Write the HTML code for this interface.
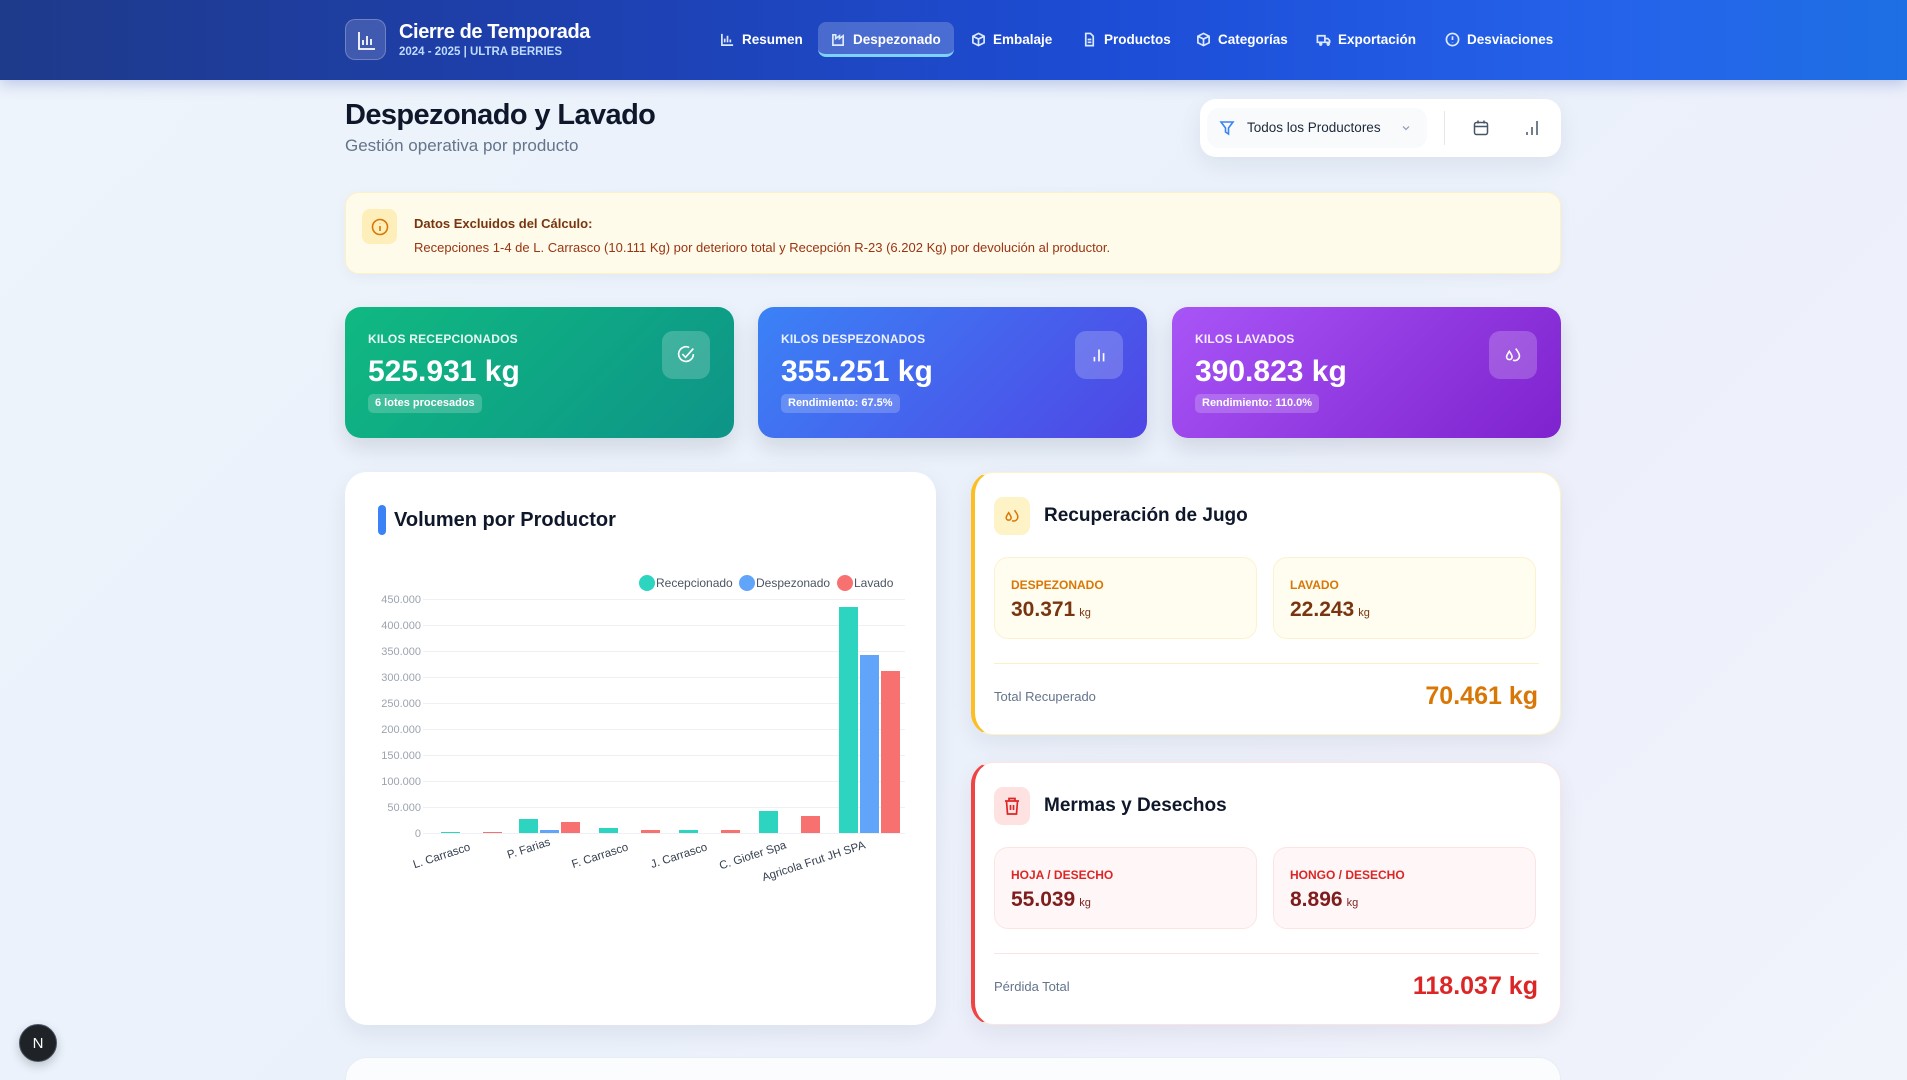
<!DOCTYPE html>
<html style="width:1907px;height:1080px;overflow:hidden"><head><meta charset="utf-8"><style>
*{box-sizing:border-box;margin:0;padding:0}
body{width:1907px;height:1080px;overflow:hidden;font-family:"Liberation Sans",sans-serif;background:linear-gradient(135deg,#eef4fb 0%,#eaf1fb 50%,#eef0fb 75%,#f1f4fb 100%);position:relative;color:#0f172a}
.abs{position:absolute}
.hdr{left:0;top:0;width:1907px;height:80px;background:linear-gradient(90deg,#1e3a8a 0%,#1e40af 30%,#1d4ed8 60%,#2563eb 85%,#1e6fe3 100%);box-shadow:0 4px 14px rgba(30,64,175,.25)}
.logo{left:345px;top:19px;width:41px;height:41px;border-radius:10px;background:rgba(255,255,255,.15);border:1px solid rgba(255,255,255,.25)}
.nav{top:22px;height:35px;display:flex;align-items:center;gap:7px;color:#fff;font-size:13.5px;font-weight:bold}
.nav svg{width:15px;height:15px;stroke:#dbeafe;fill:none;stroke-width:1.8}
.card{background:#fff;border-radius:22px;box-shadow:0 8px 24px rgba(15,23,42,.07)}
.stat{top:307px;width:389px;height:131px;border-radius:16px;color:#fff;box-shadow:0 10px 22px rgba(15,23,42,.12)}
.stat .l{position:absolute;left:23px;top:25px;font-size:12px;font-weight:bold;opacity:.9;letter-spacing:.2px}
.stat .v{position:absolute;left:23px;top:48px;font-size:30px;font-weight:bold}
.stat .b{position:absolute;left:23px;top:87px;height:19px;line-height:19px;padding:0 7px;border-radius:5px;background:rgba(255,255,255,.2);font-size:11px;font-weight:bold}
.stat .ic{position:absolute;left:317px;top:24px;width:48px;height:48px;border-radius:11px;background:rgba(255,255,255,.2);display:flex;align-items:center;justify-content:center}
.stat .ic svg{width:22px;height:22px;stroke:#fff;fill:none;stroke-width:1.8}
.sub{position:absolute;top:84px;width:263px;height:82px;border-radius:14px}
.sub .l{position:absolute;left:16px;top:20px;font-size:12px;font-weight:bold}
.sub .v{position:absolute;left:16px;top:40px;font-size:21px;font-weight:bold}
.sub .v small{font-size:11px;font-weight:normal;margin-left:4px}
</style></head><body>
<div class="abs hdr"></div>
<div class="abs logo"><svg width="41" height="41" viewBox="0 0 41 41" fill="none" stroke="#fff" stroke-width="1.8"><path d="M13 12v17h16M17 25v-5M21 25v-9M25 25v-6"/></svg></div>
<div class="abs" style="left:399px;top:21px;color:#fff;font-size:20px;font-weight:bold;letter-spacing:-.4px">Cierre de Temporada</div>
<div class="abs" style="left:399px;top:46px;color:#bfdbfe;font-size:11.5px;font-weight:bold">2024 - 2025 | ULTRA BERRIES</div>

<div class="abs nav" style="left:720px"><svg viewBox="0 0 16 16"><path d="M2 2v12h12M5 11V7M8 11V4M11 11V8"/></svg>Resumen</div>
<div class="abs" style="left:818px;top:22px;width:136px;height:35px;border-radius:8px;background:rgba(255,255,255,.2);border-bottom:3px solid #7dd3fc"></div>
<div class="abs nav" style="left:831px"><svg viewBox="0 0 16 16"><path d="M2 14V3h3v4l4-3v3l4-3v10z"/></svg>Despezonado</div>
<div class="abs nav" style="left:971px"><svg viewBox="0 0 16 16"><path d="M8 1.5l6 3v7l-6 3-6-3v-7zM2 4.5l6 3 6-3M8 7.5v7"/></svg>Embalaje</div>
<div class="abs nav" style="left:1082px"><svg viewBox="0 0 16 16"><path d="M4 1.5h5l3 3v10H4zM6 8h4M6 11h4"/></svg>Productos</div>
<div class="abs nav" style="left:1196px"><svg viewBox="0 0 16 16"><path d="M8 1.5l6 3v7l-6 3-6-3v-7zM2 4.5l6 3 6-3M8 7.5v7"/></svg>Categorías</div>
<div class="abs nav" style="left:1316px"><svg viewBox="0 0 16 16"><path d="M1.5 4h8v7h-8zM9.5 7h3l2 2v2h-5M4 13a1 1 0 1 0 0-.1M12 13a1 1 0 1 0 0-.1"/></svg>Exportación</div>
<div class="abs nav" style="left:1445px"><svg viewBox="0 0 16 16"><circle cx="8" cy="8" r="6.5"/><path d="M8 4.5v4M8 11v.5"/></svg>Desviaciones</div>

<div class="abs" style="left:345px;top:99px;font-size:29px;font-weight:bold;letter-spacing:-.6px;color:#0f172a">Despezonado y Lavado</div>
<div class="abs" style="left:345px;top:136px;font-size:17px;color:#64748b">Gestión operativa por producto</div>

<div class="abs card" style="left:1200px;top:99px;width:361px;height:58px;border-radius:16px"></div>
<div class="abs" style="left:1207px;top:108px;width:220px;height:40px;border-radius:12px;background:#f8fafc"></div>
<svg class="abs" style="left:1219px;top:120px" width="16" height="16" viewBox="0 0 16 16" fill="none" stroke="#3b82f6" stroke-width="1.6"><path d="M2 2h12l-4.5 6v6l-3-2V8z"/></svg>
<div class="abs" style="left:1247px;top:120px;font-size:13.5px;color:#1e293b">Todos los Productores</div>
<svg class="abs" style="left:1401px;top:123px" width="10" height="10" viewBox="0 0 10 10" fill="none" stroke="#94a3b8" stroke-width="1.3"><path d="M2 3.5l3 3 3-3"/></svg>
<div class="abs" style="left:1444px;top:111px;width:1px;height:34px;background:#e2e8f0"></div>
<svg class="abs" style="left:1472px;top:119px" width="18" height="18" viewBox="0 0 18 18" fill="none" stroke="#475569" stroke-width="1.5"><rect x="2.5" y="3.5" width="13" height="12" rx="2"/><path d="M2.5 7.5h13M6 1.5v3M12 1.5v3"/></svg>
<svg class="abs" style="left:1524px;top:119px" width="16" height="18" viewBox="0 0 16 18" fill="none" stroke="#475569" stroke-width="1.5"><path d="M3 16v-3M8 16V8M13 16V2"/></svg>

<div class="abs" style="left:345px;top:192px;width:1216px;height:82px;border-radius:14px;background:#fefbea;border:1px solid #fdf1c7;box-shadow:0 4px 14px rgba(15,23,42,.04)"></div>
<div class="abs" style="left:362px;top:209px;width:35px;height:35px;border-radius:8px;background:#fdeeba;display:flex;align-items:center;justify-content:center"><svg width="20" height="20" viewBox="0 0 20 20" fill="none" stroke="#d97706" stroke-width="1.6"><circle cx="10" cy="10" r="7.5"/><path d="M10 9v5M10 6.2v.3"/></svg></div>
<div class="abs" style="left:414px;top:216px;font-size:13px;font-weight:bold;color:#78350f">Datos Excluidos del Cálculo:</div>
<div class="abs" style="left:414px;top:240px;font-size:13px;color:#9a3412">Recepciones 1-4 de L. Carrasco (10.111 Kg) por deterioro total y Recepción R-23 (6.202 Kg) por devolución al productor.</div>

<div class="abs stat" style="left:345px;background:linear-gradient(135deg,#10b981,#0d9488)">
<div class="l">KILOS RECEPCIONADOS</div><div class="v">525.931 kg</div><div class="b">6 lotes procesados</div>
<div class="ic"><svg viewBox="0 0 24 24"><path d="M20 11a8 8 0 1 1-4.5-7.2"/><path d="M8 11l3.5 3.5L20 5"/></svg></div></div>
<div class="abs stat" style="left:758px;background:linear-gradient(135deg,#3b82f6,#4f46e5)">
<div class="l">KILOS DESPEZONADOS</div><div class="v">355.251 kg</div><div class="b">Rendimiento: 67.5%</div>
<div class="ic"><svg viewBox="0 0 24 24"><path d="M7 19v-5M12 19V6M17 19v-9"/></svg></div></div>
<div class="abs stat" style="left:1172px;background:linear-gradient(135deg,#a855f7,#7e22ce)">
<div class="l">KILOS LAVADOS</div><div class="v">390.823 kg</div><div class="b">Rendimiento: 110.0%</div>
<div class="ic"><svg viewBox="0 0 24 24"><path d="M8 8c-2 3-3 4.5-3 6a3 3 0 0 0 6 0c0-1.5-1-3-3-6zM15 5c2 3 4 5 4 8a5 5 0 0 1-7 4.6"/></svg></div></div>

<div class="abs card" style="left:345px;top:472px;width:591px;height:553px"></div>
<div class="abs" style="left:378px;top:505px;width:8px;height:30px;border-radius:4px;background:#3b82f6"></div>
<div class="abs" style="left:394px;top:509px;font-size:20px;font-weight:bold;color:#0f172a">Volumen por Productor</div>
<svg class="abs" style="left:345px;top:560px" width="591" height="330" font-family="Liberation Sans, sans-serif">
<g font-size="12">
<circle cx="302" cy="23" r="8" fill="#2dd4bf"/><text x="311" y="27" fill="#4b5563">Recepcionado</text>
<circle cx="402" cy="23" r="8" fill="#60a5fa"/><text x="411" y="27" fill="#4b5563">Despezonado</text>
<circle cx="500" cy="23" r="8" fill="#f87171"/><text x="509" y="27" fill="#4b5563">Lavado</text>
</g>
<g stroke="#eef0f3" stroke-width="1">
<line x1="78" x2="560" y1="39.5" y2="39.5"/><line x1="78" x2="560" y1="65.5" y2="65.5"/><line x1="78" x2="560" y1="91.5" y2="91.5"/><line x1="78" x2="560" y1="117.5" y2="117.5"/><line x1="78" x2="560" y1="143.5" y2="143.5"/><line x1="78" x2="560" y1="169.5" y2="169.5"/><line x1="78" x2="560" y1="195.5" y2="195.5"/><line x1="78" x2="560" y1="221.5" y2="221.5"/><line x1="78" x2="560" y1="247.5" y2="247.5"/><line x1="78" x2="560" y1="273.5" y2="273.5"/>
</g>
<g font-size="11" fill="#9ca3af" text-anchor="end">
<text x="76" y="43">450.000</text><text x="76" y="69">400.000</text><text x="76" y="95">350.000</text><text x="76" y="121">300.000</text><text x="76" y="147">250.000</text><text x="76" y="173">200.000</text><text x="76" y="199">150.000</text><text x="76" y="225">100.000</text><text x="76" y="251">50.000</text><text x="76" y="277">0</text>
</g>
<g>
<rect x="96" y="272" width="19" height="1" fill="#2dd4bf"/><rect x="138" y="272" width="19" height="1" fill="#f87171"/>
<rect x="174" y="259" width="19" height="14" fill="#2dd4bf"/><rect x="195" y="270" width="19" height="3" fill="#60a5fa"/><rect x="216" y="262" width="19" height="11" fill="#f87171"/>
<rect x="254" y="268" width="19" height="5" fill="#2dd4bf"/><rect x="296" y="270" width="19" height="3" fill="#f87171"/>
<rect x="334" y="270" width="19" height="3" fill="#2dd4bf"/><rect x="376" y="270" width="19" height="3" fill="#f87171"/>
<rect x="414" y="251" width="19" height="22" fill="#2dd4bf"/><rect x="456" y="256" width="19" height="17" fill="#f87171"/>
<rect x="494" y="47" width="19" height="226" fill="#2dd4bf"/><rect x="515" y="95" width="19" height="178" fill="#60a5fa"/><rect x="536" y="111" width="19" height="162" fill="#f87171"/>
</g>
<g font-size="11.5" fill="#374151" text-anchor="end">
<text transform="translate(126,290) rotate(-18)">L. Carrasco</text>
<text transform="translate(206,285) rotate(-18)">P. Farias</text>
<text transform="translate(284,290) rotate(-18)">F. Carrasco</text>
<text transform="translate(363,290) rotate(-18)">J. Carrasco</text>
<text transform="translate(442,288) rotate(-18)">C. Giofer Spa</text>
<text transform="translate(521,288) rotate(-18)">Agricola Frut JH SPA</text>
</g>
</svg>

<div class="abs card" style="left:971px;top:472px;width:590px;height:263px;border:1px solid #fdf3c9;border-left:4px solid #fbbf24">
<div class="abs" style="left:19px;top:24px;width:36px;height:38px;border-radius:9px;background:#fef3c7;display:flex;align-items:center;justify-content:center"><svg width="20" height="20" viewBox="0 0 24 24" fill="none" stroke="#d97706" stroke-width="1.8"><path d="M8 8c-2 3-3 4.5-3 6a3 3 0 0 0 6 0c0-1.5-1-3-3-6zM15 5c2 3 4 5 4 8a5 5 0 0 1-7 4.6"/></svg></div>
<div class="abs" style="left:69px;top:32px;font-size:19px;font-weight:bold;color:#0f172a">Recuperación de Jugo</div>
<div class="sub" style="left:19px;background:#fffcf0;border:1px solid #fdf2cf"><div class="l" style="color:#d97706">DESPEZONADO</div><div class="v" style="color:#78350f">30.371<small>kg</small></div></div>
<div class="sub" style="left:298px;background:#fffcf0;border:1px solid #fdf2cf"><div class="l" style="color:#d97706">LAVADO</div><div class="v" style="color:#78350f">22.243<small>kg</small></div></div>
<div class="abs" style="left:19px;top:190px;width:545px;height:1px;background:#fdf0c6"></div>
<div class="abs" style="left:19px;top:216px;font-size:13px;color:#64748b">Total Recuperado</div>
<div class="abs" style="right:22px;top:209px;font-size:25px;font-weight:bold;color:#d97706">70.461 kg</div>
</div>

<div class="abs card" style="left:971px;top:762px;width:590px;height:263px;border:1px solid #fde3e3;border-left:4px solid #ef4444">
<div class="abs" style="left:19px;top:24px;width:36px;height:38px;border-radius:9px;background:#fee2e2;display:flex;align-items:center;justify-content:center"><svg width="18" height="20" viewBox="0 0 18 20" fill="none" stroke="#dc2626" stroke-width="1.7"><path d="M2 5h14M6 5V2.5h6V5M3.5 5l1 13h9l1-13M7.5 9v5M10.5 9v5"/></svg></div>
<div class="abs" style="left:69px;top:32px;font-size:19px;font-weight:bold;color:#0f172a">Mermas y Desechos</div>
<div class="sub" style="left:19px;background:#fff7f7;border:1px solid #fde4e4"><div class="l" style="color:#dc2626">HOJA / DESECHO</div><div class="v" style="color:#7f1d1d">55.039<small>kg</small></div></div>
<div class="sub" style="left:298px;background:#fff7f7;border:1px solid #fde4e4"><div class="l" style="color:#dc2626">HONGO / DESECHO</div><div class="v" style="color:#7f1d1d">8.896<small>kg</small></div></div>
<div class="abs" style="left:19px;top:190px;width:545px;height:1px;background:#fde4e4"></div>
<div class="abs" style="left:19px;top:216px;font-size:13px;color:#64748b">Pérdida Total</div>
<div class="abs" style="right:22px;top:209px;font-size:25px;font-weight:bold;color:#dc2626">118.037 kg</div>
</div>

<div class="abs" style="left:345px;top:1057px;width:1216px;height:23px;background:#fbfcfe;border:1px solid #e8edf3;border-bottom:none;border-radius:22px 22px 0 0"></div>
<div class="abs" style="left:19px;top:1024px;width:38px;height:38px;border-radius:50%;background:#1f2328;border:1px solid #4b5563;color:#fff;font-size:15px;display:flex;align-items:center;justify-content:center;box-shadow:0 4px 10px rgba(0,0,0,.2)">N</div>
</body></html>
